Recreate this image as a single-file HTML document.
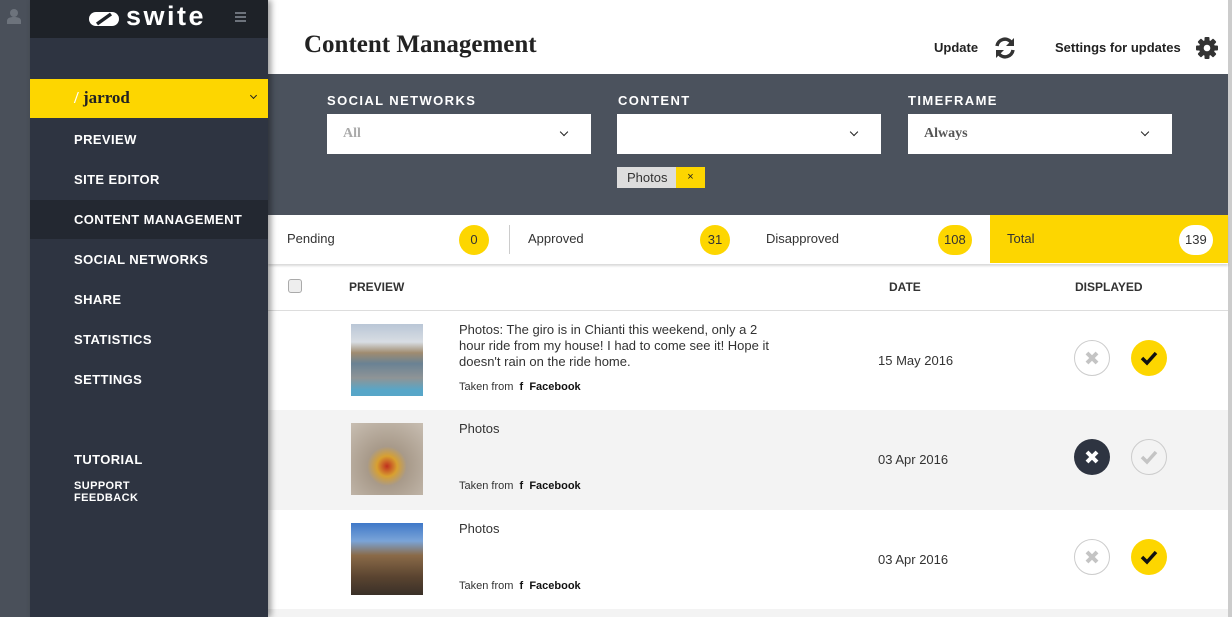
<!DOCTYPE html>
<html><head><meta charset="utf-8"><style>
*{box-sizing:border-box;margin:0;padding:0}
body{width:1232px;height:617px;overflow:hidden;font-family:"Liberation Sans",sans-serif;background:#fff;position:relative}
.rail{position:absolute;left:0;top:0;width:30px;height:617px;background:#4a505a}
.side{position:absolute;left:30px;top:0;width:238px;height:617px;background:#2e3441;box-shadow:3px 0 6px rgba(0,0,0,.4);z-index:2}
.logo{height:38px;background:#1e2228;position:relative}
.nav{position:absolute;left:44px;color:#fff;font-weight:bold;font-size:13px;letter-spacing:.4px}
.main{position:absolute;left:268px;top:0;width:960px;height:617px}
.filter{position:absolute;top:74px;left:0;width:960px;height:141px;background:#4b525d}
.lbl{position:absolute;top:19px;color:#fff;font-weight:bold;font-size:13px;letter-spacing:1.4px}
.sel{position:absolute;top:40px;width:264px;height:40px;background:#fff;font-family:"Liberation Serif",serif;font-weight:bold;font-size:14px;color:#aaa;padding:12px 16px}
.sel:after{content:"";position:absolute;right:24px;top:15px;width:5px;height:5px;border-right:1.5px solid #222;border-bottom:1.5px solid #222;transform:rotate(45deg)}
.tabs{position:absolute;top:215px;left:0;width:960px;height:49px;box-shadow:0 2px 2px rgba(0,0,0,.15);font-size:13px;color:#333}
.badge{position:absolute;top:10px;height:30px;min-width:30px;border-radius:15px;background:#fdd600;text-align:center;line-height:30px;font-size:13px;padding:0 6px}
.th{position:absolute;top:280px;font-weight:bold;font-size:12px;color:#333}
.row{position:absolute;left:0;width:960px;height:100px}
.img{position:absolute;left:83px;top:13px;width:72px;height:72px}
.txt{position:absolute;left:191px;top:11px;font-size:13px;color:#333;line-height:16px;width:322px}
.src{position:absolute;left:191px;top:70px;font-size:11px;color:#333}
.src b{color:#111}
.date{position:absolute;left:610px;top:42px;font-size:13px;color:#333}
.c{position:absolute;top:29px;width:36px;height:36px;border-radius:50%;display:flex;align-items:center;justify-content:center}
</style></head><body>
<div class="rail"><svg style="position:absolute;left:6px;top:8px" width="16" height="16" viewBox="0 0 16 16"><circle cx="8" cy="5" r="4" fill="#6d737c"/><path d="M1 16v-3c0-3 3-4 7-4s7 1 7 4v3z" fill="#6d737c"/></svg></div>
<div class="side">
 <div class="logo">
  <svg style="position:absolute;left:58px;top:9px" width="32" height="20" viewBox="0 0 32 20"><rect x="1" y="3" width="30" height="14" rx="7" fill="#fff"/><path d="M9 15L23 5" stroke="#1e2228" stroke-width="3.5"/></svg>
  <div style="position:absolute;left:96px;top:1px;color:#fff;font-weight:bold;font-size:27px;letter-spacing:2.5px">swite</div>
  <div style="position:absolute;left:205px;top:12px;width:11px;height:2px;background:#6d737c;box-shadow:0 4px #6d737c,0 8px #6d737c"></div>
 </div>
 <div style="position:absolute;top:79px;left:0;width:238px;height:39px;background:#fdd600">
  <span style="position:absolute;left:44px;top:9px;font-family:'Liberation Serif',serif;font-weight:bold;font-size:17px;color:#222"><span style="color:#fff">/</span> jarrod</span>
  <span style="position:absolute;right:12px;top:14px;width:5px;height:5px;border-right:1.5px solid #222;border-bottom:1.5px solid #222;transform:rotate(45deg)"></span>
 </div>
 <div style="position:absolute;top:200px;left:0;width:238px;height:39px;background:#232831"></div>
 <div class="nav" style="top:132px">PREVIEW</div>
 <div class="nav" style="top:172px">SITE EDITOR</div>
 <div class="nav" style="top:212px">CONTENT MANAGEMENT</div>
 <div class="nav" style="top:252px">SOCIAL NETWORKS</div>
 <div class="nav" style="top:292px">SHARE</div>
 <div class="nav" style="top:332px">STATISTICS</div>
 <div class="nav" style="top:372px">SETTINGS</div>
 <div class="nav" style="top:452px">TUTORIAL</div>
 <div class="nav" style="top:480px;font-size:11px;line-height:12px">SUPPORT<br>FEEDBACK</div>
</div>
<div style="position:absolute;left:1228px;top:0;width:4px;height:617px;background:#ccc"></div>
<div class="main">
 <div style="position:absolute;left:36px;top:31px;font-family:'Liberation Serif',serif;font-weight:bold;font-size:25px;color:#222">Content Management</div>
 <div style="position:absolute;left:666px;top:40px;font-weight:bold;font-size:13px;color:#222">Update</div>
 <svg style="position:absolute;left:725px;top:36px" width="24" height="24" viewBox="0 0 24 24" fill="none" stroke="#333" stroke-width="3.5"><path d="M4 10a8 8 0 0 1 14-4"/><path d="M20 14a8 8 0 0 1-14 4"/><path d="M21 2v8h-8z" fill="#333" stroke="none"/><path d="M3 22v-8h8z" fill="#333" stroke="none"/></svg>
 <div style="position:absolute;left:787px;top:40px;font-weight:bold;font-size:13px;color:#222">Settings for updates</div>
 <svg style="position:absolute;left:927px;top:36px" width="24" height="24" viewBox="0 0 24 24"><g fill="#333"><circle cx="12" cy="12" r="8"/><g><rect x="9.5" y="1" width="5" height="22" rx="1"/><rect x="9.5" y="1" width="5" height="22" rx="1" transform="rotate(45 12 12)"/><rect x="9.5" y="1" width="5" height="22" rx="1" transform="rotate(90 12 12)"/><rect x="9.5" y="1" width="5" height="22" rx="1" transform="rotate(135 12 12)"/></g></g><circle cx="12" cy="12" r="3.3" fill="#fff"/></svg>
 <div class="filter">
  <div class="lbl" style="left:59px">SOCIAL NETWORKS</div>
  <div class="lbl" style="left:350px">CONTENT</div>
  <div class="lbl" style="left:640px">TIMEFRAME</div>
  <div class="sel" style="left:59px">All</div>
  <div class="sel" style="left:349px"></div>
  <div class="sel" style="left:640px;color:#555">Always</div>
  <div style="position:absolute;left:349px;top:93px;height:21px;background:#ddd;font-size:13px;color:#333;padding:3px 10px 0">Photos</div>
  <div style="position:absolute;left:408px;top:93px;width:29px;height:21px;background:#fdd600;font-size:11px;text-align:center;line-height:21px;color:#222">×</div>
 </div>
 <div class="tabs">
  <span style="position:absolute;left:19px;top:16px">Pending</span><div class="badge" style="left:191px">0</div>
  <div style="position:absolute;left:241px;top:10px;width:1px;height:29px;background:#ccc"></div>
  <span style="position:absolute;left:260px;top:16px">Approved</span><div class="badge" style="left:432px">31</div>
  <span style="position:absolute;left:498px;top:16px">Disapproved</span><div class="badge" style="left:670px">108</div>
  <div style="position:absolute;left:722px;top:0;width:238px;height:48px;background:#fdd600"></div>
  <span style="position:absolute;left:739px;top:16px">Total</span><div class="badge" style="left:911px;background:#fff">139</div>
 </div>
 <div style="position:absolute;left:20px;top:279px;width:14px;height:14px;border:1px solid #aaa;border-radius:3px;background:#eee"></div>
 <div class="th" style="left:81px">PREVIEW</div>
 <div class="th" style="left:621px">DATE</div>
 <div class="th" style="left:807px">DISPLAYED</div>
 <div style="position:absolute;top:310px;left:0;width:960px;height:1px;background:#ddd"></div>

 <div class="row" style="top:311px;background:#fff">
  <div class="img" style="background:linear-gradient(180deg,#b9c6d6 0%,#d8dde3 25%,#a08c70 40%,#6a8294 55%,#8f9496 75%,#57a6c8 92%)"></div>
  <div class="txt">Photos: The giro is in Chianti this weekend, only a 2 hour ride from my house! I had to come see it! Hope it doesn't rain on the ride home.</div>
  <div class="src">Taken from &nbsp;<b>f</b>&nbsp; <b>Facebook</b></div>
  <div class="date">15 May 2016</div>
  <div class="c" style="left:806px;border:1px solid #ccc"><svg width="16" height="16" viewBox="0 0 16 16"><path d="M3 3L13 13M13 3L3 13" stroke="#c4c4c4" stroke-width="4"/></svg></div>
  <div class="c" style="left:863px;background:#fdd600"><svg width="18" height="16" viewBox="0 0 18 16"><path d="M2 8l5 5 9-10" fill="none" stroke="#111" stroke-width="3.5"/></svg></div>
 </div>
 <div class="row" style="top:410px;background:#f3f3f3">
  <div class="img" style="background:radial-gradient(circle at 50% 60%,#c0301f 0,#d8a030 18%,#a89a8a 35%,#c8beb2 100%)"></div>
  <div class="txt">Photos</div>
  <div class="src">Taken from &nbsp;<b>f</b>&nbsp; <b>Facebook</b></div>
  <div class="date">03 Apr 2016</div>
  <div class="c" style="left:806px;background:#2e3441"><svg width="16" height="16" viewBox="0 0 16 16"><path d="M3 3L13 13M13 3L3 13" stroke="#fff" stroke-width="4"/></svg></div>
  <div class="c" style="left:863px;border:1px solid #ccc"><svg width="18" height="16" viewBox="0 0 18 16"><path d="M2 8l5 5 9-10" fill="none" stroke="#c4c4c4" stroke-width="3.5"/></svg></div>
 </div>
 <div class="row" style="top:510px;background:#fff">
  <div class="img" style="background:linear-gradient(180deg,#3f78c8 0%,#7aa4d8 25%,#8a6a48 45%,#5a4430 75%,#3a3028 100%)"></div>
  <div class="txt">Photos</div>
  <div class="src">Taken from &nbsp;<b>f</b>&nbsp; <b>Facebook</b></div>
  <div class="date">03 Apr 2016</div>
  <div class="c" style="left:806px;border:1px solid #ccc"><svg width="16" height="16" viewBox="0 0 16 16"><path d="M3 3L13 13M13 3L3 13" stroke="#c4c4c4" stroke-width="4"/></svg></div>
  <div class="c" style="left:863px;background:#fdd600"><svg width="18" height="16" viewBox="0 0 18 16"><path d="M2 8l5 5 9-10" fill="none" stroke="#111" stroke-width="3.5"/></svg></div>
 </div>
 <div style="position:absolute;top:609px;left:0;width:960px;height:8px;background:#f3f3f3"></div>
</div>
</body></html>
